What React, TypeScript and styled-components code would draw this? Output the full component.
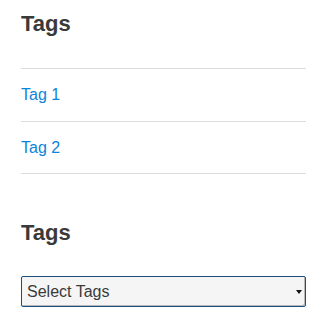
import styled, { createGlobalStyle } from 'styled-components'

const GlobalStyle = createGlobalStyle`
	html, body {
		margin: 0;
		padding: 0;
		background: #fff;
	}
	body {
		font-family: "Liberation Sans", Arial, sans-serif;
	}
`

const tags = ['Tag 1', 'Tag 2']

const App: React.FC = () => {
	return (
		<>
			<GlobalStyle />
			<Sidebar>
				<Widget>
					<Title>Tags</Title>
					<TagList>
						{tags.map((tag) => (
							<TagItem key={tag}>
								<TagLink href="#">{tag}</TagLink>
							</TagItem>
						))}
					</TagList>
				</Widget>
				<Widget $spaced>
					<Title>Tags</Title>
					<SelectWrap>
						<TagSelect defaultValue="">
							<option value="">Select Tags</option>
							{tags.map((tag) => (
								<option key={tag} value={tag}>
									{tag}
								</option>
							))}
						</TagSelect>
						<Caret />
					</SelectWrap>
				</Widget>
			</Sidebar>
		</>
	)
}

export default App

const Sidebar = styled.aside`
	width: 285px;
	padding: 11px 20px 0 21px;
`
const Widget = styled.section<{ $spaced?: boolean }>`
	margin-top: ${(p) => (p.$spaced ? '46px' : '0')};
`
const Title = styled.h2`
	margin: 0;
	font-size: 22px;
	line-height: 26.4px;
	font-weight: 700;
	color: #3a3a3a;
`
const TagList = styled.ul`
	list-style: none;
	margin: 30.6px 0 0;
	padding: 0;
	border-bottom: 1px solid #dcdcdc;
`
const TagItem = styled.li`
	border-top: 1px solid #dcdcdc;
	padding: 14px 0 13.5px;
	line-height: 24px;
`
const TagLink = styled.a`
	font-size: 16px;
	color: #0b84d9;
	text-decoration: none;
`
const SelectWrap = styled.div`
	position: relative;
	margin-top: 29.4px;
	width: 285px;
`
const TagSelect = styled.select`
	appearance: none;
	display: block;
	width: 100%;
	height: 31px;
	margin: 0;
	padding: 0 16px 0 5px;
	font-family: "Liberation Sans", Arial, sans-serif;
	font-size: 16px;
	color: #3a3a3a;
	background: #f5f5f5;
	border: 1px solid #1b4f7e;
	border-radius: 2px;
	box-shadow: inset -2px -2px 0 -1px #b8b8b8;
	outline: none;
`
const Caret = styled.span`
	position: absolute;
	right: 4px;
	top: 14px;
	width: 0;
	height: 0;
	border-left: 3px solid transparent;
	border-right: 3px solid transparent;
	border-top: 4px solid #111;
	pointer-events: none;
`
